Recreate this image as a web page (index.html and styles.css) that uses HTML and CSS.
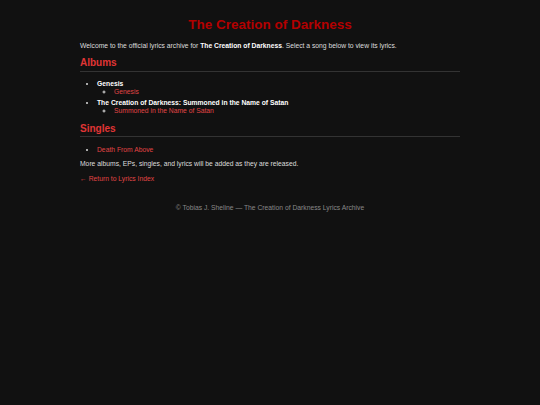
FILE: index.html
```html
<!DOCTYPE html>
<html lang="en">
<head>
    <meta charset="UTF-8">
    <meta name="viewport" content="width=device-width, initial-scale=1.0">
    <title>The Creation of Darkness - Lyrics</title>
    <link rel="stylesheet" href="styles.css">
</head>
<body>
    <div class="wrap">
    <h1>The Creation of Darkness</h1>
    <p>Welcome to the official lyrics archive for <strong>The Creation of Darkness</strong>. Select a song below to view its lyrics.</p>

    <h2>Albums</h2>
    <ul class="list">
        <li><strong>Genesis</strong>
            <ul>
                <li><a href="#">Genesis</a></li>
            </ul>
        </li>
        <li><strong>The Creation of Darkness: Summoned in the Name of Satan</strong>
            <ul>
                <li><a href="#">Summoned in the Name of Satan</a></li>
            </ul>
        </li>
    </ul>

    <h2>Singles</h2>
    <ul class="list">
        <li><a href="#">Death From Above</a></li>
    </ul>

    <p>More albums, EPs, singles, and lyrics will be added as they are released.</p>
    <p><a href="#">&larr; Return to Lyrics Index</a></p>

    <footer>&copy; Tobias J. Sheline &mdash; The Creation of Darkness Lyrics Archive</footer>
    </div>
</body>
</html>
```
FILE: styles.css
```css
body {
    background-color: #111;
    color: #ddd;
    margin: 0;
    font-family: "Liberation Sans", Arial, sans-serif;
    font-size: 6.75px;
    line-height: 1.15;
}
.wrap {
    max-width: 380px;
    margin: 0 auto;
    padding: 8px 0;
}
h1 {
    color: #b30000;
    text-align: center;
    font-size: 13.5px;
    margin: 9px 0;
}
h2 {
    color: #e03535;
    font-size: 10px;
    margin: 8px 0 6px;
    padding-bottom: 2px;
    border-bottom: 1px solid #333;
}
p {
    margin: 6.75px 0;
}
strong {
    color: #fff;
}
a {
    color: #e04545;
    text-decoration: none;
}
.list {
    margin: 8.5px 0 5.75px;
    padding-left: 17px;
}
.list > li {
    margin-bottom: 3.5px;
}
.list ul {
    padding-left: 17px;
    margin: 0;
    list-style-type: circle;
}
footer {
    text-align: center;
    color: #888;
    margin-top: 21px;
}
```
